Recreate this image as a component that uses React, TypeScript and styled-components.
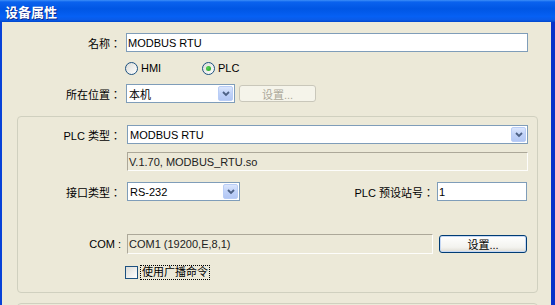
import React from "react";
import styled, { createGlobalStyle } from "styled-components";

const Global = createGlobalStyle`
  html, body { margin: 0; padding: 0; background: #ECE9D8; }
  body {
    font-family: "Liberation Sans", "Noto Sans CJK SC", sans-serif;
    font-size: 11px;
    color: #000;
  }
`;

/* ---------------- window frame ---------------- */

const Window = styled.div`
  width: 555px;
  height: 305px;
  overflow: hidden;
  display: flex;
  flex-direction: column;
`;

const TitleBar = styled.div`
  height: 22px;
  flex: none;
  display: flex;
  align-items: center;
  padding-left: 5px;
  background: linear-gradient(
    to bottom,
    #3d8ff8 0%,
    #0a62ee 9%,
    #0056e4 40%,
    #0660f4 75%,
    #0a5be8 90%,
    #0046cc 100%
  );
  color: #fff;
  font-family: "Noto Sans CJK SC", sans-serif;
  font-weight: bold;
  font-size: 13px;
  text-shadow: 1px 1px 0 #0c2a8a;
`;

const Body = styled.div`
  flex: 1;
  display: flex;
  flex-direction: column;
  padding-top: 11px;
  background: #ece9d8;
  border-left: 2px solid #0842d8;
  border-right: 4px solid #0831c9;
`;

/* ---------------- rows / labels ---------------- */

const Row = styled.div<{ $top?: number; $h?: number; $pl?: number }>`
  display: flex;
  align-items: center;
  height: ${(p) => p.$h ?? 19}px;
  margin-top: ${(p) => p.$top ?? 0}px;
  padding-left: ${(p) => p.$pl ?? 0}px;
  padding-right: 10px;
`;

const Label = styled.div<{ $w?: number }>`
  width: ${(p) => (p.$w ? `${p.$w}px` : "auto")};
  flex: ${(p) => (p.$w ? "none" : "1")};
  text-align: right;
  white-space: nowrap;
  padding-right: 2px;
  font-family: "Liberation Sans", "Noto Sans CJK TC", sans-serif;
`;

const Gap = styled.div<{ $w: number }>`
  width: ${(p) => p.$w}px;
  flex: none;
`;

/* ---------------- controls ---------------- */

const TextBox = styled.div<{ $w: number }>`
  width: ${(p) => p.$w}px;
  height: 100%;
  box-sizing: border-box;
  flex: none;
  border: 1px solid #7f9db9;
  background: #fff;
  padding-left: 1px;
  display: flex;
  align-items: center;
`;

const StaticBox = styled.div<{ $w: number }>`
  width: ${(p) => p.$w}px;
  height: 100%;
  box-sizing: border-box;
  flex: none;
  border: 1px solid;
  border-color: #aca899 #fdfdfb #fdfdfb #aca899;
  background: #ece9d8;
  padding-left: 1px;
  display: flex;
  align-items: center;
  color: #222;
`;

const Combo = styled.div<{ $w: number }>`
  width: ${(p) => p.$w}px;
  height: 100%;
  box-sizing: border-box;
  flex: none;
  border: 1px solid #7f9db9;
  background: #fff;
  display: flex;
  align-items: stretch;
  padding: 1px;
`;

const ComboText = styled.div`
  flex: 1;
  display: flex;
  align-items: center;
  padding-left: 1px;
`;

const ComboArrow = styled.div`
  width: 15px;
  flex: none;
  border-radius: 2px;
  border: 1px solid #b9cdf6;
  box-sizing: border-box;
  background: linear-gradient(to bottom, #dbe6fd, #c0d2f8 50%, #b3c7f4);
  display: flex;
  align-items: center;
  justify-content: center;
`;

const Button = styled.div<{ $w: number; $h?: number; $disabled?: boolean }>`
  width: ${(p) => p.$w}px;
  height: ${(p) => p.$h ?? 17}px;
  flex: none;
  box-sizing: border-box;
  border-radius: 3px;
  display: flex;
  align-items: center;
  justify-content: center;
  border: 1px solid ${(p) => (p.$disabled ? "#c9c7ba" : "#003c74")};
  color: ${(p) => (p.$disabled ? "#aca899" : "#000")};
  background: ${(p) =>
    p.$disabled
      ? "#f5f4ea"
      : "linear-gradient(to bottom, #ffffff, #f3f3ef 70%, #dedbd2)"};
  box-shadow: ${(p) => (p.$disabled ? "none" : "inset 0 0 0 1px #c6d8f4")};
`;

const ChoiceGroup = styled.div`
  display: flex;
  align-items: center;
`;

const Choice = styled.label<{ $w?: number }>`
  display: flex;
  align-items: center;
  gap: 3px;
  width: ${(p) => (p.$w ? `${p.$w}px` : "auto")};
`;

const Radio = styled.span<{ $checked?: boolean }>`
  width: 13px;
  height: 13px;
  box-sizing: border-box;
  border-radius: 50%;
  border: 1px solid #1c5180;
  background: linear-gradient(135deg, #dcdcd7, #ffffff);
  display: flex;
  align-items: center;
  justify-content: center;

  &::after {
    content: "";
    display: ${(p) => (p.$checked ? "block" : "none")};
    width: 5px;
    height: 5px;
    border-radius: 50%;
    background: radial-gradient(circle at 35% 35%, #55d055, #21a121);
  }
`;

const Check = styled.span`
  width: 13px;
  height: 13px;
  box-sizing: border-box;
  border: 1px solid #1c5180;
  background: linear-gradient(135deg, #dcdcd7, #ffffff);
`;

const FocusText = styled.span`
  outline: 1px dotted #000;
  padding: 0 1px;
  line-height: 13px;
`;

const GroupBox = styled.div<{ $top: number }>`
  margin: ${(p) => p.$top}px 0 0 15px;
  width: 521px;
  height: 177px;
  flex: none;
  box-sizing: border-box;
  border: 1px solid #d0d0bf;
  border-radius: 4px;
  padding-top: 8px;
  display: flex;
  flex-direction: column;
`;

const Chevron = () => (
  <svg width="8" height="6" viewBox="0 0 8 6">
    <polyline
      points="1,1 4,4 7,1"
      fill="none"
      stroke="#4d6185"
      strokeWidth="1.8"
    />
  </svg>
);

const Dropdown: React.FC<{ w: number; value: string }> = ({ w, value }) => (
  <Combo $w={w}>
    <ComboText>{value}</ComboText>
    <ComboArrow>
      <Chevron />
    </ComboArrow>
  </Combo>
);

export default function App() {
  return (
    <Window>
      <Global />
      <TitleBar>设备属性</TitleBar>
      <Body>
        <Row>
          <Label $w={119}>名称：</Label>
          <Gap $w={3} />
          <TextBox $w={402}>MODBUS RTU</TextBox>
        </Row>

        <Row $top={9} $h={14} $pl={123}>
          <ChoiceGroup>
            <Choice $w={77}>
              <Radio />
              HMI
            </Choice>
            <Choice>
              <Radio $checked />
              PLC
            </Choice>
          </ChoiceGroup>
        </Row>

        <Row $top={9}>
          <Label $w={119}>所在位置：</Label>
          <Gap $w={3} />
          <Dropdown w={109} value="本机" />
          <Gap $w={4} />
          <Button $w={77} $disabled>
            设置...
          </Button>
        </Row>

        <GroupBox $top={13}>
          <Row>
            <Label $w={103}>PLC 类型：</Label>
            <Gap $w={4} />
            <Dropdown w={401} value="MODBUS RTU" />
          </Row>

          <Row $top={8}>
            <Label $w={103} />
            <Gap $w={4} />
            <StaticBox $w={401}>V.1.70, MODBUS_RTU.so</StaticBox>
          </Row>

          <Row $top={11}>
            <Label $w={103}>接口类型：</Label>
            <Gap $w={4} />
            <Dropdown w={113} value="RS-232" />
            <Label>PLC 预设站号：</Label>
            <Gap $w={1} />
            <TextBox $w={90}>1</TextBox>
          </Row>

          <Row $top={33} $h={20}>
            <Label $w={103}>COM :</Label>
            <Gap $w={4} />
            <StaticBox $w={306}>COM1 (19200,E,8,1)</StaticBox>
            <Gap $w={6} />
            <Button $w={88} $h={18}>
              设置...
            </Button>
          </Row>

          <Row $top={12} $h={13} $pl={107}>
            <Choice>
              <Check />
              <FocusText>使用广播命令</FocusText>
            </Choice>
          </Row>
        </GroupBox>

        <GroupBox $top={10} />
      </Body>
    </Window>
  );
}
